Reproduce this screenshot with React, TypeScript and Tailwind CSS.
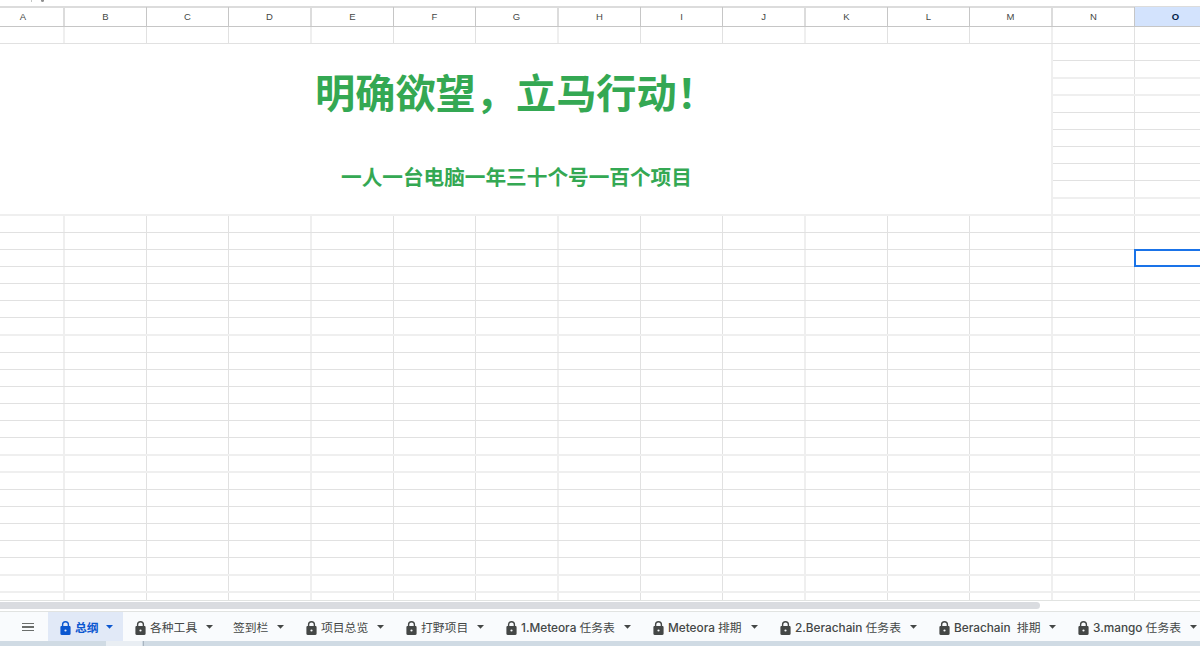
import React from "react";
import clsx from "clsx";

const COLUMNS = [
  { name: "A", width: "w-[65px]", pad: "pr-[17px]" },
  { name: "B", width: "w-[82px]" },
  { name: "C", width: "w-[82px]" },
  { name: "D", width: "w-[83px]" },
  { name: "E", width: "w-[82px]" },
  { name: "F", width: "w-[82px]" },
  { name: "G", width: "w-[83px]" },
  { name: "H", width: "w-[82px]" },
  { name: "I", width: "w-[82px]" },
  { name: "J", width: "w-[83px]" },
  { name: "K", width: "w-[82px]" },
  { name: "L", width: "w-[82px]" },
  { name: "M", width: "w-[83px]" },
  { name: "N", width: "w-[82px]" },
  { name: "O", width: "w-[82px]" },
];

// Rows are a fractional number of pixels high, so some rules cover two pixels.
function rule(index: number) {
  const y = 43.2 + 17.14 * index;
  const part = y - Math.floor(y);
  const soft = part > 0.45 && part < 0.7;
  return { soft, end: soft ? Math.floor(y) + 2 : Math.round(y) + 1 };
}

const ROWS = Array.from({ length: 34 }, (_, i) => {
  const { soft, end } = rule(i);
  return { index: i, soft, height: end - (i === 0 ? 27 : rule(i - 1).end) };
});

function Row({ row, from = 0 }: { row: (typeof ROWS)[number]; from?: number }) {
  return (
    <div
      className={clsx("flex shrink-0", row.soft ? "border-b-2 border-[#efefef]" : "border-b border-[#e1e1e1]")}
      style={{ height: row.height }}
    >
      {COLUMNS.slice(from).map((column, i) => (
        <div
          key={column.name}
          className={clsx(
            "relative shrink-0",
            column.width,
            (i + from) % 3 === 0 ? "border-r-2 border-[#efefef]" : "border-r border-[#e1e1e1]",
          )}
        >
          {row.index === 13 && column.name === "O" && (
            <div className="absolute -top-px right-0 -bottom-px -left-px border-2 border-[#1a73e8]" />
          )}
        </div>
      ))}
    </div>
  );
}

const TABS = [
  { latin: "", label: "总纲", width: "w-[75px]", locked: true, active: true },
  { latin: "", label: "各种工具", width: "w-[100px]", locked: true },
  { latin: "", label: "签到栏", width: "w-[71px]" },
  { latin: "", label: "项目总览", width: "w-[100px]", locked: true },
  { latin: "", label: "打野项目", width: "w-[100px]", locked: true },
  { latin: "1.Meteora ", label: "任务表", width: "w-[147px]", locked: true },
  { latin: "Meteora ", label: "排期", width: "w-[127px]", locked: true },
  { latin: "2.Berachain ", label: "任务表", width: "w-[159px]", locked: true },
  { latin: "Berachain  ", label: "排期", width: "w-[139px]", locked: true },
  { latin: "3.mango ", label: "任务表", width: "w-[141px]", locked: true },
];

function Lock() {
  return (
    <svg className="mr-[4px] mb-px h-[14px] w-[11px] shrink-0" viewBox="0 0 11 14">
      <path d="M2.6 6V3.6a2.9 2.9 0 0 1 5.8 0V6" fill="none" stroke="currentColor" strokeWidth="1.4" />
      <path
        fillRule="evenodd"
        fill="currentColor"
        d="M1.6 5h7.8c.7 0 1.2.5 1.2 1.2v6.6c0 .7-.5 1.2-1.2 1.2H1.6c-.7 0-1.2-.5-1.2-1.2V6.2c0-.7.5-1.2 1.2-1.2zM5.5 8.4a1.1 1.1 0 1 0 0 2.2a1.1 1.1 0 1 0 0-2.2z"
      />
    </svg>
  );
}

export default function App() {
  return (
    <div className="flex h-[646px] w-[1200px] flex-col overflow-hidden bg-white font-['Inter','Noto_Sans_CJK_SC',sans-serif]">
      <div className="flex h-[6px] shrink-0 items-start pl-[31px]">
        <div className="h-[2px] w-px bg-[#c4c7c5]" />
        <div className="ml-[9px] h-[2px] w-[3px] rounded-b-full bg-[#8f8f8f]" />
      </div>
      <div className="flex h-[21px] shrink-0 border-t border-b border-t-[#dcdcdc] border-b-[#c6c6c6] font-['Liberation_Sans',sans-serif] text-[9.5px] text-[#444746] shadow-[inset_0_1px_#dcdcdc]">
        {COLUMNS.map((column, i) => (
          <div
            key={column.name}
            className={clsx(
              "flex shrink-0 items-center justify-center pt-px",
              column.width,
              column.pad,
              i % 3 === 0 ? "border-r-2 border-[#dcdcdc]" : "border-r border-[#c6c6c6]",
              column.name === "O" && "bg-[#d3e3fd] font-bold text-[#041e49]",
            )}
          >
            {column.name}
          </div>
        ))}
      </div>
      <div className="flex h-[573px] shrink-0 flex-col overflow-hidden">
        <Row row={ROWS[0]} />
        <div className="flex shrink-0">
          <div className="flex w-[1053px] shrink-0 flex-col border-r-2 border-b-2 border-[#efefef] font-bold whitespace-nowrap text-[#34a853]">
            <h1 className="mt-[20px] ml-[315px] h-[60px] text-[40.2px] leading-[60px]">明确欲望，立马行动！</h1>
            <p className="mt-[39px] ml-[341px] h-[30px] text-[20.65px] leading-[30px]">一人一台电脑一年三十个号一百个项目</p>
          </div>
          <div className="flex flex-col">
            {ROWS.slice(1, 11).map((row) => (
              <Row key={row.index} row={row} from={13} />
            ))}
          </div>
        </div>
        {ROWS.slice(11).map((row) => (
          <Row key={row.index} row={row} />
        ))}
      </div>
      <div className="flex h-[12px] shrink-0 flex-col border-t border-b border-[#e1e3e1]">
        <div className="mt-px h-[7px] w-[1040px] rounded-r-full bg-[#dadce0]" />
      </div>
      <div className="flex h-[29px] shrink-0 bg-[#f9fbfd] text-[#444746]">
        <div className="flex w-[48px] shrink-0 items-center pt-[1px] pl-[22px]">
          <div className="flex flex-col gap-[2px]">
            <div className="h-[1.5px] w-[12px] bg-[#6b6e6c]" />
            <div className="h-[1.5px] w-[12px] bg-[#6b6e6c]" />
            <div className="h-[1.5px] w-[12px] bg-[#6b6e6c]" />
          </div>
        </div>
        {TABS.map((tab) => (
          <div
            key={tab.latin + tab.label}
            className={clsx(
              "flex shrink-0 items-center pt-[4px] pr-[10px] text-[11.8px]",
              tab.width,
              tab.locked ? "pl-[12px]" : "pl-[10px]",
              tab.active && "bg-[#e1e9f7] font-bold text-[#0b57d0]",
            )}
          >
            {tab.locked && <Lock />}
            <span className="whitespace-pre">
              {tab.latin && <span className="font-medium">{tab.latin}</span>}
              {tab.label}
            </span>
            <svg className="mb-[3px] ml-auto h-[4px] w-[7px] shrink-0" viewBox="0 0 7 4">
              <path d="M0 0h7L3.5 3.7z" fill="currentColor" />
            </svg>
          </div>
        ))}
      </div>
      <div className="flex h-[5px] shrink-0 bg-[#d0dbe4]">
        <div className="ml-[106px] w-[36px] bg-[#e9eef3]" />
        <div className="ml-px w-px bg-[#aab5c0]" />
      </div>
    </div>
  );
}
